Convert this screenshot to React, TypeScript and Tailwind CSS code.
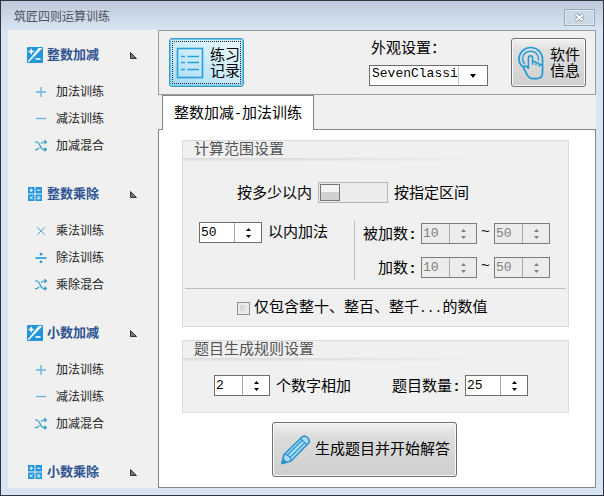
import { useState } from "react";
import type { ReactNode } from "react";

type IconName = "plus" | "minus" | "times" | "divide" | "shuffle";

interface NavGroupData {
  title: string;
  icon: "exposure" | "calc";
  open: boolean;
  items: { label: string; icon: IconName }[];
}

const addSub: NavGroupData["items"] = [
  { label: "加法训练", icon: "plus" },
  { label: "减法训练", icon: "minus" },
  { label: "加减混合", icon: "shuffle" },
];

const mulDiv: NavGroupData["items"] = [
  { label: "乘法训练", icon: "times" },
  { label: "除法训练", icon: "divide" },
  { label: "乘除混合", icon: "shuffle" },
];

const groups: NavGroupData[] = [
  { title: "整数加减", icon: "exposure", open: true, items: addSub },
  { title: "整数乘除", icon: "calc", open: true, items: mulDiv },
  { title: "小数加减", icon: "exposure", open: true, items: addSub },
  { title: "小数乘除", icon: "calc", open: false, items: mulDiv },
];

const ExposureIcon = () => (
  <svg viewBox="0 0 16 16" className="h-4 w-4 shrink-0">
    <rect width="16" height="16" rx="1" fill="#2196dc" />
    <path d="M1 15V14L11.5 1H15V1.6L2 15Z" fill="#f0f6fa" />
    <path d="M1.5 4.5H7M4.2 1.8V7.2" stroke="#fff" strokeWidth="1.4" />
    <path d="M8.5 12H13.5" stroke="#fff" strokeWidth="1.6" />
  </svg>
);

const CalcIcon = () => (
  <svg viewBox="0 0 16 16" className="h-4 w-4 shrink-0">
    <g fill="#2196dc">
      <rect x="1" y="1" width="6.5" height="6.5" />
      <rect x="8.5" y="1" width="6.5" height="6.5" />
      <rect x="1" y="8.5" width="6.5" height="6.5" />
      <rect x="8.5" y="8.5" width="6.5" height="6.5" />
    </g>
    <path
      d="M2.5 4.2H6M4.2 2.5V6M10 4.2H13.5M2.8 10.3L5.7 13.2M5.7 10.3L2.8 13.2M10 11H13.5M10 12.8H13.5"
      stroke="#fff"
      strokeWidth="1"
    />
  </svg>
);

const paths: Record<IconName, ReactNode> = {
  plus: <path d="M6 1V11M1 6H11" stroke="#64b4dc" strokeWidth="1.3" />,
  minus: <path d="M1 5.5H11" stroke="#64b4dc" strokeWidth="1.3" />,
  times: <path d="M2 2L10 10M10 2L2 10" stroke="#55a9d6" strokeWidth="1" />,
  divide: (
    <>
      <path d="M0.5 6H11.5" stroke="#2f9fd4" strokeWidth="1.8" />
      <circle cx="6" cy="2.2" r="1.4" fill="#2f9fd4" />
      <circle cx="6" cy="9.8" r="1.4" fill="#2f9fd4" />
    </>
  ),
  shuffle: (
    <path
      d="M0 2H1.6C3 2 3.8 3 5 5.6C6.2 8.5 7 9.6 8.6 9.6H11.2M0 9.6H1.6C3 9.6 3.7 8.6 4.2 7.6M6.2 3.8C6.8 2.7 7.4 2 8.6 2H11.2M9.4 0.2L11.4 2L9.4 3.8M9.4 7.8L11.4 9.6L9.4 11.4"
      stroke="#2b9fc4"
      strokeWidth="1.2"
    />
  ),
};

const ItemIcon = ({ name }: { name: IconName }) => (
  <svg viewBox="0 0 12 12" fill="none" className="h-3 w-3 shrink-0">
    {paths[name]}
  </svg>
);

const ListIcon = () => (
  <svg viewBox="0 0 28 32" fill="none" stroke="#2a9fd8" className="h-8 w-7 shrink-0">
    <rect x="1.5" y="1.5" width="25" height="29" strokeWidth="1.6" />
    <path d="M5 9.5H9M11.5 9.5H23M5 15.5H9M11.5 15.5H23M5 22.5H9M11.5 22.5H23" strokeWidth="1.5" />
  </svg>
);

const TouchIcon = () => (
  <svg viewBox="0 0 26 34" fill="none" stroke="#1f9ad6" strokeWidth="1.7" strokeLinecap="round" strokeLinejoin="round" className="h-[34px] w-[26px] shrink-0">
    <path d="M5.5 21.2C2.6 19.3 1 16.4 1 13C1 6.5 6.3 1.5 12.7 1.5C19 1.5 24.5 6.5 24.5 13V27C24.5 30.5 22 32.6 18.5 32.6H15C12 32.6 10.4 31 9.2 28.8L5.8 22.5C4.9 20.2 8 18.8 10.4 22" />
    <path d="M6.4 17.4C5.2 16.2 4.6 14.6 4.6 12.7C4.6 8.4 8.1 5.2 12.6 5.2C17 5.2 20.4 8.4 20.4 12.6V14" strokeWidth="1.4" />
    <path d="M10.4 22V12C10.4 9 14.6 9 14.6 12V18.3M14.6 16C16 14.9 18 15.5 18 17.2V18.8M18 17.2C19.5 16.2 21.3 17 21.3 18.5V20M21.3 18.6C22.6 18 24.5 18.8 24.5 20.5" strokeWidth="1.5" />
  </svg>
);

const PencilIcon = () => (
  <svg viewBox="0 0 30 30" fill="none" stroke="#2a93cf" strokeWidth="1.6" strokeLinejoin="round" className="h-[30px] w-[30px] shrink-0">
    <path d="M1 28.5L3 19.5L20.5 2.5C22 0.8 24.5 0.8 26.5 2.5C28.5 4.5 28.8 7 27 8.8L10 26Z" fill="#a9dcf5" />
    <path d="M3 19.5C6.5 19 10.5 22.5 10 26M6.2 20L21.5 5M9 22.5L24.5 7.2M19.5 3.5L26 9.8" strokeWidth="1.1" />
    <path d="M1 28.5L2 24.2L5.2 27.3Z" fill="#2a93cf" />
  </svg>
);

interface SpinnerProps {
  label: string;
  initial: number;
  disabled?: boolean;
  wide?: boolean;
}

const Spinner = ({ label, initial, disabled, wide }: SpinnerProps) => {
  const [value, setValue] = useState(initial);
  const tone = disabled
    ? "border-[#7c7c7c] bg-[#ececec] text-[#808080]"
    : "border-[#6e6e6e] bg-white text-black";

  return (
    <span className={`flex h-[21px] shrink-0 border ${wide ? "w-[63px]" : "w-14"} ${tone}`}>
      <input
        type="text"
        inputMode="numeric"
        aria-label={label}
        disabled={disabled}
        value={value}
        onChange={(e) => setValue(Number(e.target.value) || 0)}
        className="w-0 min-w-0 flex-1 pl-px font-[Liberation_Mono,monospace] text-[13px] leading-[19px] outline-none"
      />
      <span className="flex w-[27px] flex-col items-center justify-center gap-1 border-l border-[#a8a8a8]">
        <button type="button" aria-label={`${label} 增加`} disabled={disabled} onClick={() => setValue(value + 1)}>
          <svg viewBox="0 0 5 3" className="h-[3px] w-[5px]" fill="currentColor">
            <path d="M0 3L2.5 0L5 3Z" />
          </svg>
        </button>
        <button type="button" aria-label={`${label} 减少`} disabled={disabled} onClick={() => setValue(value - 1)}>
          <svg viewBox="0 0 5 3" className="h-[3px] w-[5px]" fill="currentColor">
            <path d="M0 0L2.5 3L5 0Z" />
          </svg>
        </button>
      </span>
    </span>
  );
};

const GroupBox = ({ title, children }: { title: string; children: ReactNode }) => (
  <section className="border border-[#dcdcdc] bg-[#f0f0f0]">
    <h2 className="h-4 pl-[11px] leading-4 text-[#555]">{title}</h2>
    <div className="mt-px h-1 bg-linear-to-b from-[#d8d8d8] to-[#f0f0f0] mask-r-from-30% mask-r-to-80%" />
    {children}
  </section>
);

const NavGroup = ({ group }: { group: NavGroupData }) => {
  const [open, setOpen] = useState(group.open);

  return (
    <section className="shrink-0">
      <button
        type="button"
        aria-expanded={open}
        onClick={() => setOpen(!open)}
        className="flex h-6 w-[110px] items-center gap-1 text-[13px] font-bold text-[#2f5390]"
      >
        {group.icon === "exposure" ? <ExposureIcon /> : <CalcIcon />}
        {group.title}
        <svg viewBox="0 0 7 7" className="ml-auto h-[7px] w-[7px]">
          <path d="M0.5 0.5V6.5H6.5Z" fill="#777" stroke="#333" />
        </svg>
      </button>
      {open && (
        <ul className="flex flex-col gap-[9px] pt-4 pl-2">
          {group.items.map((item) => (
            <li key={item.label}>
              <button type="button" className="flex h-[18px] items-center gap-[9px] text-xs text-[#222]">
                <ItemIcon name={item.icon} />
                {item.label}
              </button>
            </li>
          ))}
        </ul>
      )}
    </section>
  );
};

const Sidebar = () => (
  <nav className="flex w-[150px] shrink-0 flex-col gap-[27px] overflow-hidden pt-[13px] pl-[19px]">
    {groups.map((group) => (
      <NavGroup key={group.title} group={group} />
    ))}
  </nav>
);

const Toolbar = () => (
  <div className="flex h-[65px] shrink-0 items-center border border-[#9a9a9a] pr-[9px] pl-[10px]">
    <button
      type="button"
      className="flex h-[49px] w-[75px] shrink-0 rounded-[3px] border border-[#3d9cc4] bg-linear-to-b from-[#d4effb] to-[#9fdaf6] p-[2px] inset-ring inset-ring-[#6cc6ec]"
    >
      <span className="flex h-full w-full items-center gap-[6px] border border-dotted border-[#222] bg-linear-to-r from-transparent to-white/50 pl-[3px] text-left leading-4">
        <ListIcon />
        <span>练习<br />记录</span>
      </span>
    </button>
    <div className="mr-[23px] ml-auto flex w-[119px] flex-col gap-2">
      <label htmlFor="skin" className="pl-[2px] leading-[18px]">外观设置：</label>
      <div className="relative h-[21px] border border-[#6e6e6e] bg-white">
        <select id="skin" className="block h-4 w-full appearance-none pl-[2px] font-[Liberation_Mono,monospace] text-[13px] leading-4 outline-none">
          <option>SevenClassic</option>
        </select>
        <span className="pointer-events-none absolute inset-y-0 right-0 flex w-[29px] items-center justify-center border-l border-[#c8c8c8] bg-white">
          <svg viewBox="0 0 6 4" className="h-1 w-[6px]">
            <path d="M0 0H6L3 4Z" fill="#000" />
          </svg>
        </span>
      </div>
    </div>
    <button
      type="button"
      className="flex h-[49px] w-[75px] shrink-0 items-center gap-[6px] rounded-[3px] border border-[#707070] bg-linear-to-b from-[#f2f2f2] via-[#dedede] via-25% to-[#d0d0d0] pl-[6px] text-left leading-4 inset-ring inset-ring-[#f8f8f8]"
    >
      <TouchIcon />
      <span>软件<br />信息</span>
    </button>
  </div>
);

const RangeSettings = () => (
  <GroupBox title="计算范围设置">
    <div className="flex items-center gap-[6px] pt-5 pl-[54px] leading-5">
      <label htmlFor="mode">按多少以内</label>
      <input
        id="mode"
        type="checkbox"
        role="switch"
        className="flex h-[21px] w-[70px] appearance-none border border-[#b4b4b4] bg-[#ececec] p-px before:h-full before:w-5 before:border before:border-[#777] before:bg-linear-to-b before:from-[#f4f4f4] before:from-50% before:to-[#d0d0d0] before:to-50% before:content-[''] checked:justify-end"
      />
      <span>按指定区间</span>
    </div>
    <div className="flex pt-[18px] pl-4">
      <div className="flex w-[156px] items-start gap-[6px] border-r border-[#bdbdbd] pt-px leading-5">
        <Spinner label="以内加法" initial={50} wide />
        <span>以内加法</span>
      </div>
      <div className="flex flex-col gap-[13px] pt-[2px] pb-[2px]">
        {["被加数", "加数"].map((name) => (
          <div key={name} className="flex items-center">
            <span className="w-[66px] pr-1 text-right leading-5">
              {name}<span className="inline-block w-[9px] text-center font-bold">:</span>
            </span>
            <Spinner label={`${name} 最小值`} initial={10} disabled />
            <span className="w-[17px] pb-[6px] text-center leading-[15px]">~</span>
            <Spinner label={`${name} 最大值`} initial={50} disabled />
          </div>
        ))}
      </div>
    </div>
    <hr className="mx-[2px] mt-2 border-[#bdbdbd]" />
    <label className="flex items-center gap-1 pt-2 pb-[7px] pl-[54px] leading-5">
      <input type="checkbox" className="h-[13px] w-[13px] appearance-none border border-[#8e8f8f] bg-linear-to-br from-[#c8c8c8] to-[#f4f4f4] inset-ring-2 inset-ring-[#ececec] checked:bg-[#2196dc]" />
      <span>仅包含整十、整百、整千<span className="font-[Liberation_Mono,monospace] text-[13px]">...</span>的数值</span>
    </label>
  </GroupBox>
);

const RuleSettings = () => (
  <GroupBox title="题目生成规则设置">
    <div className="flex items-center pt-[13px] pr-10 pb-4 pl-[31px] leading-5">
      <Spinner label="个数字相加" initial={2} />
      <span className="pl-[6px]">个数字相加</span>
      <span className="ml-auto pr-1">
        题目数量<span className="inline-block w-[9px] text-center font-bold">:</span>
      </span>
      <Spinner label="题目数量" initial={25} wide />
    </div>
  </GroupBox>
);

export default function App() {
  return (
    <div className="flex h-screen flex-col overflow-hidden border border-[#34343e] bg-[#d7e4f2] px-[7px] pb-[7px] font-[Liberation_Sans,'Noto_Sans_CJK_SC',sans-serif] text-[15px] text-black">
      <header className="-mx-[7px] flex h-[29px] shrink-0 items-center justify-between bg-linear-to-b from-[#bdcbdb] to-[#d7e4f2] pr-2 pl-[13px]">
        <h1 className="pt-[2px] text-xs text-[#4b5057]">筑匠四则运算训练</h1>
        <button type="button" aria-label="关闭" className="mt-1 flex h-[17px] w-[31px] items-center justify-center border border-[#9aa9ba] bg-[#cbd8e6] inset-ring inset-ring-[#dde7f1]">
          <svg viewBox="0 0 11 9" className="h-[9px] w-[11px]">
            <path d="M2 1.5L9 7.5M9 1.5L2 7.5" stroke="#8390a0" strokeWidth="3.4" />
            <path d="M2.2 1.7L8.8 7.3M8.8 1.7L2.2 7.3" stroke="#fff" strokeWidth="1.8" />
          </svg>
        </button>
      </header>
      <div className="flex min-h-0 flex-1 bg-[#f0f0f0]">
        <Sidebar />
        <main className="flex min-w-0 flex-1 flex-col">
          <Toolbar />
          <div role="tablist" className="z-10 -mb-px flex shrink-0 pl-[4px]">
            <button role="tab" type="button" aria-selected="true" className="h-[35px] border border-b-0 border-[#84888c] bg-white px-[11px]">
              整数加减<span className="inline-block w-2 text-center">-</span>加法训练
            </button>
          </div>
          <div role="tabpanel" className="flex min-h-0 flex-1 flex-col gap-[13px] border border-[#84888c] bg-white pt-[10px] pr-[26px] pl-[23px]">
            <RangeSettings />
            <RuleSettings />
            <button
              type="button"
              className="-mt-1 ml-[90px] flex h-[55px] w-[185px] shrink-0 items-center gap-1 rounded-[3px] border border-[#707070] bg-linear-to-b from-[#f2f2f2] via-[#dcdcdc] via-25% to-[#cfcfcf] pl-2 inset-ring inset-ring-[#f8f8f8]"
            >
              <PencilIcon />
              生成题目并开始解答
            </button>
          </div>
        </main>
      </div>
    </div>
  );
}
